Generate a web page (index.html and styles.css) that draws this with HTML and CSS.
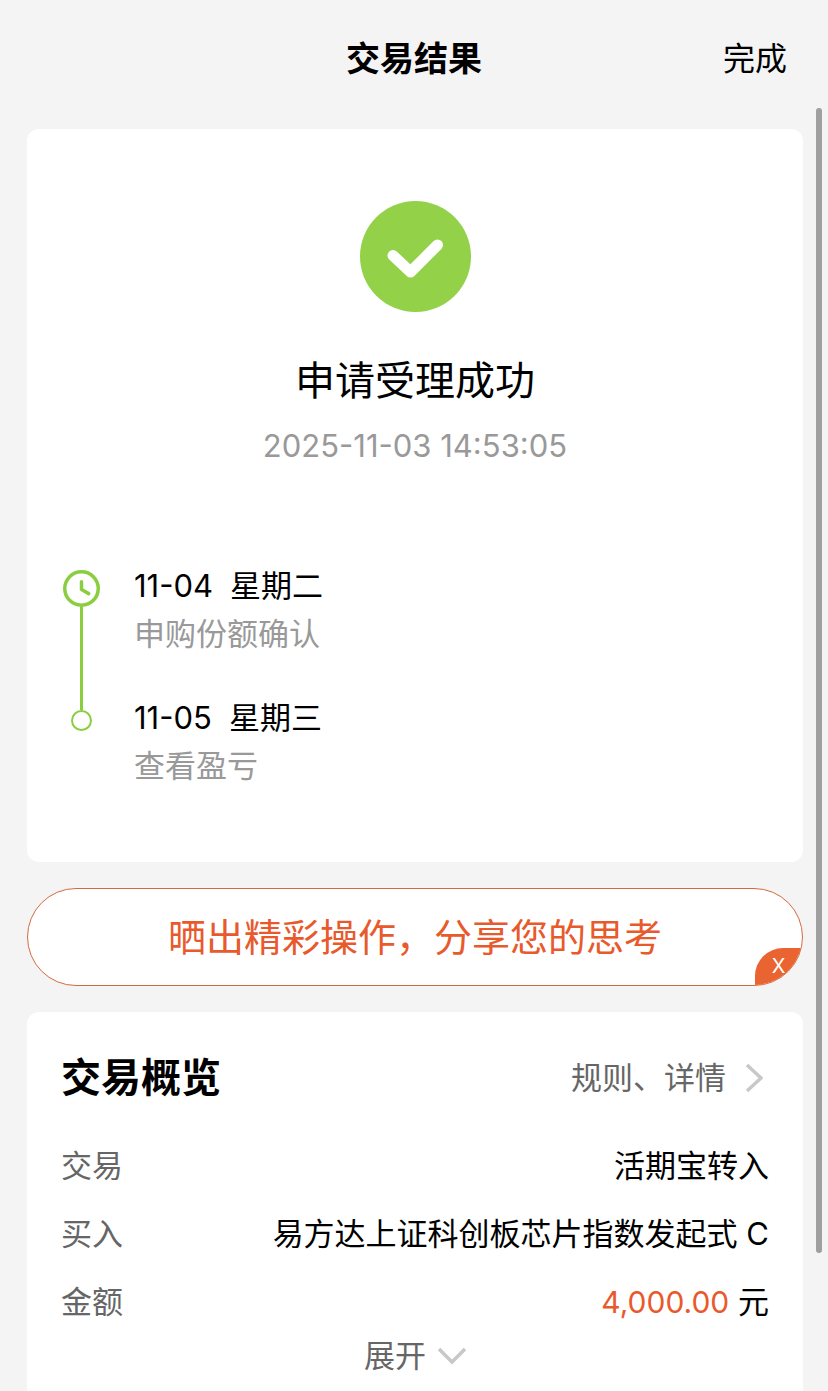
FILE: index.html
```html
<!DOCTYPE html>
<html lang="zh-CN">
<head>
    <meta charset="UTF-8">
    <meta name="viewport" content="width=device-width, initial-scale=1.0">
    <title>交易结果</title>

    <link rel="stylesheet" href="styles.css">
</head>
<body>

    <header class="top">
        <h1>交易结果</h1>
        <button type="button" class="done">完成</button>
    </header>

    <main>
        <section class="card result">
            <svg class="success" viewBox="0 0 111 111" aria-hidden="true">
                <circle cx="55.5" cy="55.5" r="55.5" fill="#93d149"/>
                <path d="M33 54.500 L50.500 71 L77.500 44" fill="none" stroke="#fff" stroke-width="11" stroke-linecap="round" stroke-linejoin="round"/>
            </svg>
            <h2>申请受理成功</h2>
            <time class="time">2025-11-03 14:53:05</time>

            <ol class="steps">
                <li>
                    <div class="marker">
                        <svg class="clock" viewBox="0 0 36 36" aria-hidden="true">
                            <circle cx="18" cy="18" r="16.300" fill="none" stroke="#8ace40" stroke-width="3.400"/>
                            <path d="M18 11.500 V19 L25 23" fill="none" stroke="#8ace40" stroke-width="3.400" stroke-linecap="round" stroke-linejoin="round"/>
                        </svg>
                        <span class="line"></span>
                    </div>
                    <div class="step">
                        <p class="day"><span>11-04</span><span>星期二</span></p>
                        <p class="note">申购份额确认</p>
                    </div>
                </li>
                <li>
                    <div class="marker">
                        <span class="line short"></span>
                        <span class="dot"></span>
                    </div>
                    <div class="step">
                        <p class="day"><span>11-05</span><span>星期三</span></p>
                        <p class="note">查看盈亏</p>
                    </div>
                </li>
            </ol>
        </section>

        <div class="share">
            <a href="#">晒出精彩操作，分享您的思考</a>
            <button type="button" class="close">X</button>
        </div>

        <section class="card overview">
            <div class="overview_head">
                <h2>交易概览</h2>
                <a href="#">规则、详情
                    <svg class="arrow" viewBox="0 0 18 30" aria-hidden="true">
                        <path d="M2 2 L16 15 L2 28" fill="none" stroke="#c8c8c8" stroke-width="3.500"/>
                    </svg>
                </a>
            </div>
            <dl>
                <div class="row">
                    <dt>交易</dt>
                    <dd>活期宝转入</dd>
                </div>
                <div class="row">
                    <dt>买入</dt>
                    <dd>易方达上证科创板芯片指数发起式 C</dd>
                </div>
                <div class="row">
                    <dt>金额</dt>
                    <dd><span class="amount">4,000.00</span> 元</dd>
                </div>
            </dl>
            <button type="button" class="expand">展开
                <svg class="down" viewBox="0 0 28 18" aria-hidden="true">
                    <path d="M1 2 L14 15 L27 2" fill="none" stroke="#c8c8c8" stroke-width="3.500"/>
                </svg>
            </button>
        </section>
    </main>

    <div class="scrollbar"></div>

</body>
</html>
```
FILE: styles.css
```css
* {
    box-sizing: border-box;
    margin: 0;
    padding: 0;
}

body {
    display: flex;
    flex-direction: column;
    min-height: 100vh;
    background: #f4f4f4;
    color: #000;
    font-family: Inter, "Noto Sans CJK SC", sans-serif;
    font-size: 31px;
    line-height: 48px;
}

button {
    border: none;
    background: none;
    color: inherit;
    font: inherit;
    cursor: pointer;
}

a {
    color: inherit;
    text-decoration: none;
}

ol {
    list-style: none;
}

.top {
    display: grid;
    grid-template-columns: 1fr auto 1fr;
    padding: 35px 41px 46px;
}

.top h1 {
    grid-column: 2;
    font-size: 34px;
    font-weight: bold;
}

.done {
    justify-self: end;
    font-size: 32px;
}

main {
    flex: 1;
    display: flex;
    flex-direction: column;
    gap: 26px;
    padding: 0 25px 0 27px;
}

.card {
    background: #fff;
    border-radius: 12px;
}

.result {
    display: flex;
    flex-direction: column;
    align-items: center;
    padding: 72px 36px;
}

.success {
    width: 111px;
    height: 111px;
}

.result h2 {
    margin-top: 41px;
    font-size: 40px;
    font-weight: normal;
    line-height: 56px;
}

.time {
    margin-top: 13px;
    color: #999;
}

.steps {
    align-self: stretch;
    margin-top: 92px;
}

.steps li {
    display: flex;
    gap: 34px;
}

.marker {
    display: flex;
    flex-direction: column;
    align-items: center;
    width: 37px;
}

.clock {
    width: 37px;
    height: 37px;
    margin-top: 8px;
}

.line {
    flex: 1;
    width: 3px;
    background: #8ace40;
}

.short {
    flex: none;
    height: 16px;
}

.dot {
    width: 21px;
    height: 21px;
    border: 2px solid #8ace40;
    border-radius: 50%;
}

.steps li:first-child .step {
    padding-bottom: 36px;
}

.day {
    display: flex;
    gap: 17px;
}

.note {
    color: #999;
}

.share {
    position: relative;
    overflow: hidden;
    border: 1px solid #d4693c;
    border-radius: 49px;
    background: #fff;
    color: #e8592b;
    font-size: 38px;
    text-align: center;
}

.share a {
    display: block;
    padding: 24px 0;
}

.close {
    position: absolute;
    right: 0;
    bottom: 0;
    width: 47px;
    height: 37px;
    border-radius: 28px 0 0 0;
    background: #e96430;
    color: #fff;
    font-size: 20px;
    line-height: 37px;
}

.overview {
    flex: 1;
    display: flex;
    flex-direction: column;
    padding: 38px 34px 15px;
    border-radius: 12px 12px 0 0;
}

.overview_head {
    display: flex;
    justify-content: space-between;
    align-items: center;
    margin-bottom: 26px;
    line-height: 56px;
}

.overview_head h2 {
    font-size: 40px;
}

.overview_head a {
    display: flex;
    align-items: center;
    gap: 19px;
    padding-right: 6px;
    color: #666;
}

.arrow {
    width: 18px;
    height: 30px;
}

.row {
    display: flex;
    justify-content: space-between;
    line-height: 68px;
}

dt {
    color: #666;
}

.amount {
    color: #e8592b;
    font-size: 30px;
}

.expand {
    display: flex;
    align-items: center;
    align-self: center;
    gap: 12px;
    color: #666;
    line-height: 40px;
}

.down {
    width: 28px;
    height: 18px;
}

/* scroll thumb over the right edge */
.scrollbar {
    position: fixed;
    top: 108px;
    right: 6px;
    bottom: 138px;
    width: 6px;
    border-radius: 3px;
    background: #9f9f9f;
}
```
